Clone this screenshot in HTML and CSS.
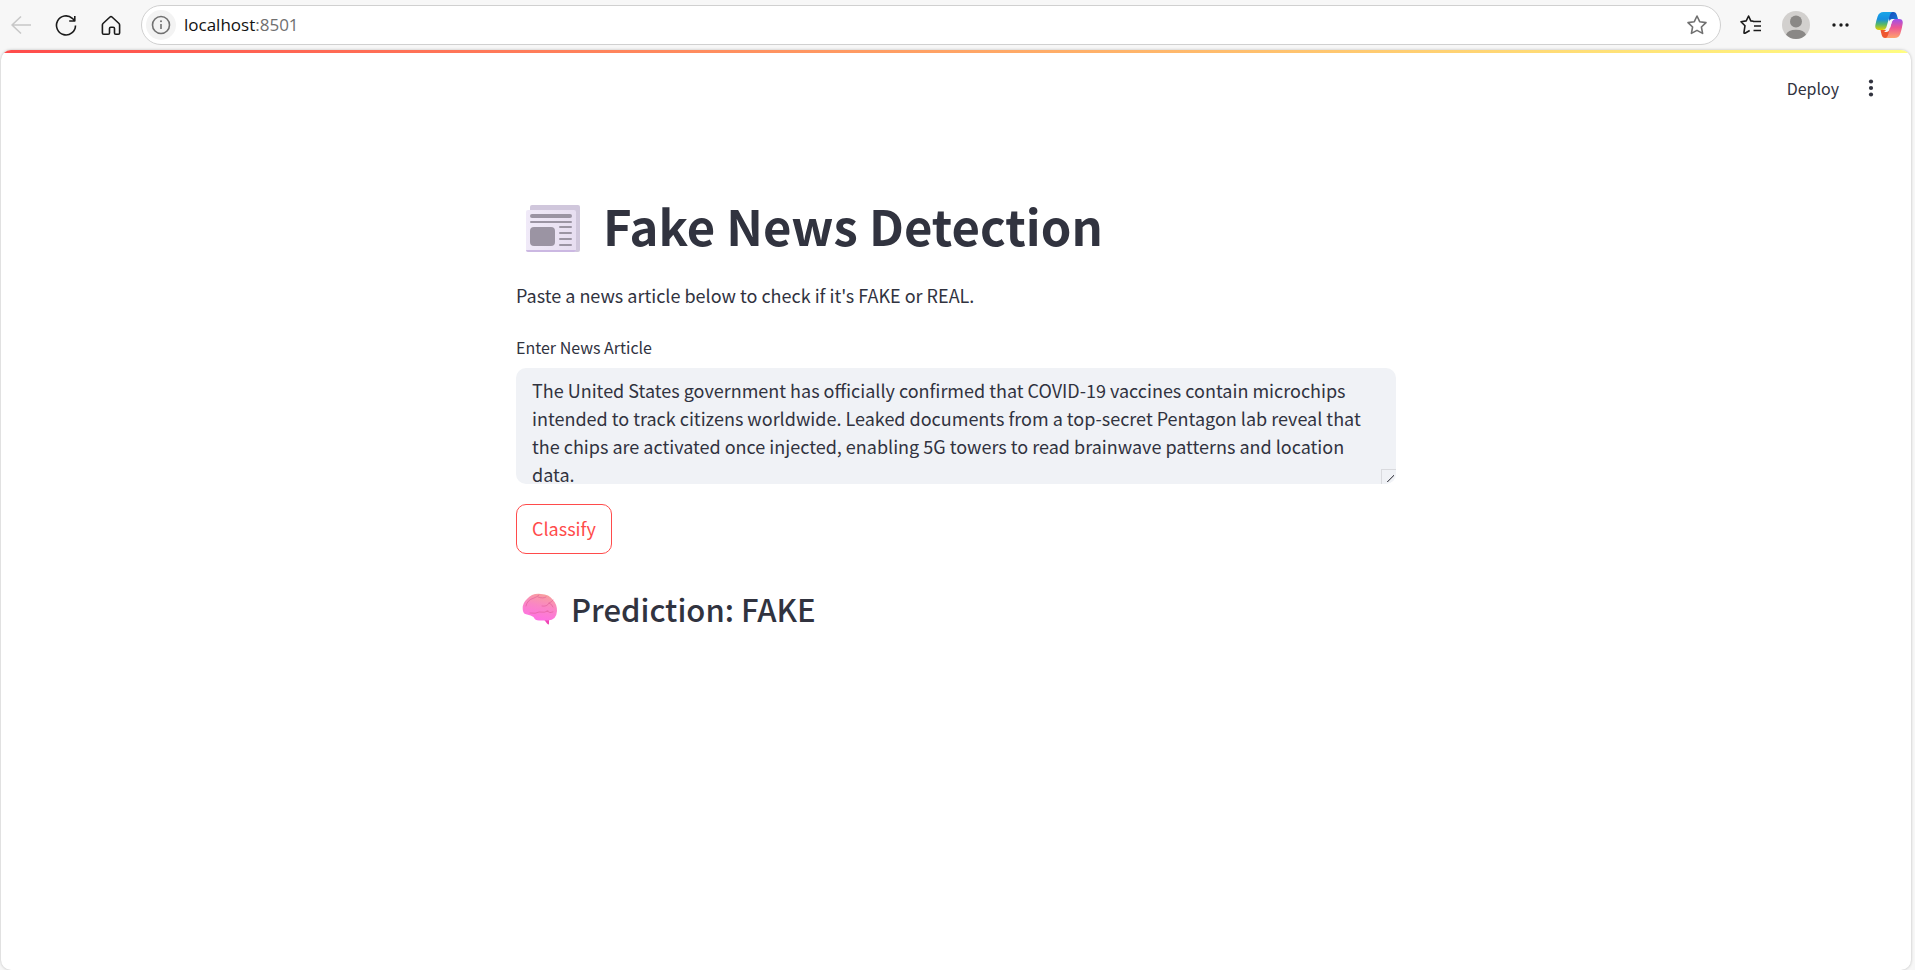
FILE: index.html
```html
<!DOCTYPE html>
<html lang="en">
<head>
<meta charset="utf-8">
<title>Fake News Detection</title>
<link rel="stylesheet" href="styles.css">
</head>
<body>
<header class="browser">
  <button class="tool back" aria-label="Back" disabled><svg width="24" height="24" viewBox="0 0 24 24"><path d="M22 12H3M12 3.500L3 12l9 8.500"/></svg></button>
  <button class="tool" aria-label="Refresh"><svg width="24" height="24" viewBox="0 0 24 24"><path d="M21.500 12.500a9.500 9.500 0 1 1-3.200-7.200L20.500 7.500M20.800 3v5h-5.600"/></svg></button>
  <button class="tool" aria-label="Home"><svg width="24" height="24" viewBox="0 0 24 24"><path d="M4 10.500 11 4q1-.9 2 0l7 6.500q.6.6.6 1.400V20q0 1.300-1.300 1.300h-2.500q-1.300 0-1.300-1.300v-4.500q0-1.300-1.300-1.300h-2.400q-1.300 0-1.300 1.300V20q0 1.300-1.300 1.300H4.700q-1.300 0-1.300-1.300v-8.100q0-.8.6-1.400z"/></svg></button>
  <div class="address">
    <button class="site-info" aria-label="Site information"><svg width="20" height="20" viewBox="0 0 20 20"><circle cx="10" cy="10" r="8.500"/><path d="M10 9v5"/><circle class="dot" cx="10" cy="6.300" r="1"/></svg></button>
    <span class="url">localhost<span class="port">:8501</span></span>
    <button class="favorite" aria-label="Add to favorites"><svg width="22" height="22" viewBox="0 0 22 22"><path d="m11 2 2.700 5.700 6.300.9-4.600 4.400 1.200 6.400-5.600-3-5.600 3L6.600 13 2 8.600l6.300-.9z"/></svg></button>
  </div>
  <button class="tool" aria-label="Favorites"><svg width="24" height="24" viewBox="0 0 24 24"><path d="M14.500 8.300 11.800 7.900 9.600 3 7.200 7.900 2 8.700l4 4-1 6.400q-.2 1.800 1.400.9l4.300-2.500M14 8.500h8M15 13h7M14.500 17.500H22"/></svg></button>
  <button class="tool" aria-label="Profile"><svg width="28" height="28" viewBox="0 0 28 28" class="avatar"><circle class="disc" cx="14" cy="14" r="14"/><circle class="person" cx="14" cy="10.500" r="6"/><path class="person" d="M4 23.800Q6 18.700 14 18.700t10 5.100Q20 28 14 28T4 23.800z"/></svg></button>
  <button class="tool" aria-label="Settings and more"><svg width="24" height="24" viewBox="0 0 24 24"><g class="solid"><circle cx="5" cy="12" r="1.700"/><circle cx="12" cy="12" r="1.700"/><circle cx="18" cy="12" r="1.700"/></g></svg></button>
  <button class="tool copilot" aria-label="Copilot"><svg width="28" height="28" viewBox="0 0 28 28">
    <defs>
      <linearGradient id="cool" x1="0" y1="0" x2="0" y2="1"><stop offset="0" stop-color="#18a6e8"/><stop offset=".4" stop-color="#168fe0"/><stop offset=".68" stop-color="#55b76a"/><stop offset="1" stop-color="#e7d000"/></linearGradient>
      <linearGradient id="warm" x1="0" y1="0" x2="0" y2="1"><stop offset="0" stop-color="#9c50ee"/><stop offset=".45" stop-color="#ed5694"/><stop offset="1" stop-color="#ffa36c"/></linearGradient>
      <linearGradient id="fold" x1="0" y1="0" x2="1" y2="1"><stop offset="0" stop-color="#1746b8"/><stop offset="1" stop-color="#1480dc"/></linearGradient>
    </defs>
    <path fill="url(#fold)" d="M13 1h5.500q2.500 0 3.300 3L23 8h-4.500q-3 0-4 3z"/>
    <path fill="#ee5730" d="M15 27H10q-2.500 0-3.300-3L5.500 19H10q3 0 4-3l3 4z"/>
    <path fill="url(#cool)" d="M8.500 1H18q-2.200 0-3.200 3.500l-3.500 12Q10.300 19 7.500 19H4Q-.5 19 .4 14q.7-4 2.200-8.500Q4 1 8.500 1z"/>
    <path fill="url(#warm)" d="M19.500 27H10q2.200 0 3.200-3.500l3.500-12Q17.700 8 20.500 8H24q4.500 0 3.600 5-.7 4.500-2.200 9.500-1.400 4.500-5.900 4.500z"/>
    <path fill="#f7f7f7" d="M14.600 9.500q.8-1.500 2.900-1.500h2q-2 .6-2.800 3.300l-2.600 8q-.6 1.700-2.600 1.700H9q1.800-.8 2.500-3z"/>
  </svg></button>
</header>

<div class="page">
  <div class="rainbow"></div>
  <nav class="app-bar">
    <button class="deploy">Deploy</button>
    <button class="menu" aria-label="Main menu"><svg width="20" height="20" viewBox="0 0 20 20"><circle cx="10" cy="3.500" r="2.100"/><circle cx="10" cy="10" r="2.100"/><circle cx="10" cy="16.500" r="2.100"/></svg></button>
  </nav>
  <main class="content">
    <h1 class="title">
      <svg width="54" height="48" viewBox="0 0 54 48" aria-hidden="true">
        <defs><linearGradient id="paper" x1="0" x2="1"><stop offset="0" stop-color="#f0eaf8"/><stop offset="1" stop-color="#e7def1"/></linearGradient></defs>
        <path fill="#d0c7dc" d="M6 0h46q2 0 2 2v43q0 2-2 2h-3L4 8V2q0-2 2-2z"/>
        <rect y="5" width="50" height="42" rx="2" fill="url(#paper)"/>
        <path fill="#cbb8e2" d="M0 45h50q0 2-2 2H2q-2 0-2-2z"/>
        <g fill="#9b94a3"><rect x="4" y="9" width="42" height="4" rx="2"/><rect x="4" y="16" width="42" height="2" rx="1"/><rect x="4" y="22" width="25" height="19" rx="4"/><rect x="33" y="21" width="13" height="2" rx="1"/><rect x="33" y="27" width="13" height="2" rx="1"/><rect x="33" y="33" width="13" height="2" rx="1"/><rect x="33" y="39" width="13" height="2" rx="1"/></g>
      </svg>
      <span>Fake News Detection</span>
    </h1>
    <p class="intro">Paste a news article below to check if it's FAKE or REAL.</p>
    <label class="label" for="article">Enter News Article</label>
    <textarea class="article" id="article" spellcheck="false">The United States government has officially confirmed that COVID-19 vaccines contain microchips intended to track citizens worldwide. Leaked documents from a top-secret Pentagon lab reveal that the chips are activated once injected, enabling 5G towers to read brainwave patterns and location data.</textarea>
    <button class="classify">Classify</button>
    <h2 class="prediction">
      <svg width="36" height="32" viewBox="0 0 36 32" aria-hidden="true">
        <defs><linearGradient id="brain" x1=".65" y1="0" x2=".35" y2="1"><stop offset="0" stop-color="#f8a09c"/><stop offset=".45" stop-color="#fa86c4"/><stop offset="1" stop-color="#ff6fe6"/></linearGradient></defs>
        <path fill="#ef45b4" d="M22 26.500l3 4q2 1.800 2 0V26z"/>
        <path fill="url(#brain)" d="M1 18Q-.5 11 5 6 10 0 19 1q8 0 12 6 4 4 4 11-.5 9-9 9.500H17q-4 0-5.500-3.500Q9 22 5 21.500 1.500 21 1 18z"/>
        <path fill="none" stroke="#dd5c98" stroke-opacity=".6" stroke-width="1" stroke-linecap="round" d="M4 13q1-6 8-8 3-1 5-3M16 4q5 2 8 0M8 20q6 1 9-1 6 1 9-1M25 18q3 3 6 1M20 13q5 1 7-3 3-1 4-3M27 10q3 1 4 4"/>
      </svg>
      <span>Prediction: FAKE</span>
    </h2>
  </main>
</div>
</body>
</html>
```
FILE: styles.css
```css
* { box-sizing: border-box; }
body {
  margin: 0;
  min-height: 100vh;
  display: flex;
  flex-direction: column;
  background: #f7f7f7;
  color: #31333f;
  font-family: "Noto Sans CJK SC", "Open Sans", sans-serif;
  font-size: 18px;
}
button { font: inherit; color: inherit; background: none; border: 0; padding: 0; }
svg { display: block; flex: none; }

.browser {
  display: flex;
  align-items: center;
  gap: 17px;
  height: 50px;
  padding: 0 12px 1px 7px;
}
.tool {
  width: 28px;
  height: 28px;
  display: grid;
  place-items: center;
}
.browser svg { fill: none; stroke: #1b1b1b; stroke-width: 1.6; stroke-linejoin: round; }
.browser .back svg { stroke: #c8c8c8; }
.browser .avatar, .browser .copilot svg, .browser .solid { stroke: none; }
.browser .solid { fill: #1b1b1b; }
.copilot { margin-left: 3px; }
.disc { fill: #d2d0ce; }
.person { fill: #8a8886; }

.address {
  flex: 1;
  display: flex;
  align-items: center;
  gap: 8px;
  height: 40px;
  margin: 0 -1px;
  padding: 0 12px 0 4px;
  background: #fff;
  border: 1px solid #d0d0d0;
  border-radius: 20px;
}
.site-info {
  width: 30px;
  height: 30px;
  display: grid;
  place-items: center;
  border-radius: 50%;
  background: #f3f3f3;
}
.browser .address svg { stroke: #717171; }
.browser .dot { fill: #717171; stroke: none; }
.url {
  flex: 1;
  font-family: "Open Sans", "Noto Sans", sans-serif;
  font-size: 17px;
  color: #111;
}
.port { color: #707070; }

.page {
  flex: 1;
  margin: 0 4px 0 1px;
  background: #fff;
  border-radius: 10px;
  overflow: hidden;
  box-shadow: 0 0 3px rgba(0, 0, 0, 0.25);
}
.rainbow { height: 3px; background: linear-gradient(90deg, #ff4b4b, #fffd80); }

.app-bar {
  display: flex;
  justify-content: flex-end;
  align-items: center;
  gap: 22px;
  height: 69px;
  padding-right: 30px;
}
.deploy { font-size: 16px; line-height: 24px; }
.menu svg { fill: #31333f; }

.content {
  display: flex;
  flex-direction: column;
  max-width: 880px;
  margin: 0 auto;
  padding-top: 70px;
}
.title, .prediction { display: flex; margin: 0; }
.title {
  align-items: flex-end;
  gap: 23px;
  padding-left: 10px;
  font-size: 49px;
  line-height: 66px;
  font-weight: 700;
}
.title svg { margin-bottom: 5px; }
.intro { margin: 23px 0 26px; line-height: 28px; }
.label { font-size: 16px; line-height: 24px; margin-bottom: 9px; }
.article {
  width: 100%;
  height: 116px;
  padding: 8px 16px;
  border: 0;
  border-radius: 10px;
  background: #f0f2f6;
  color: inherit;
  font: inherit;
  line-height: 28px;
  overflow: hidden;
  resize: vertical;
}
.article::-webkit-resizer {
  border: solid #d9dade;
  border-width: 1px 0 0 1px;
  background: linear-gradient(135deg, transparent 46%, #55565e 46% 56%, #b4b5ba 56% 64%, transparent 64%) 5px 5px / 7px 7px no-repeat;
}
.classify {
  align-self: flex-start;
  height: 50px;
  margin-top: 20px;
  padding: 0 15px 2px;
  border: 1px solid #ff4b4b;
  border-radius: 10px;
  color: #ff4b4b;
}
.prediction {
  align-items: center;
  gap: 13px;
  margin-top: 34px;
  padding-left: 6px;
  font-size: 31px;
  line-height: 42px;
  font-weight: 500;
}
```
